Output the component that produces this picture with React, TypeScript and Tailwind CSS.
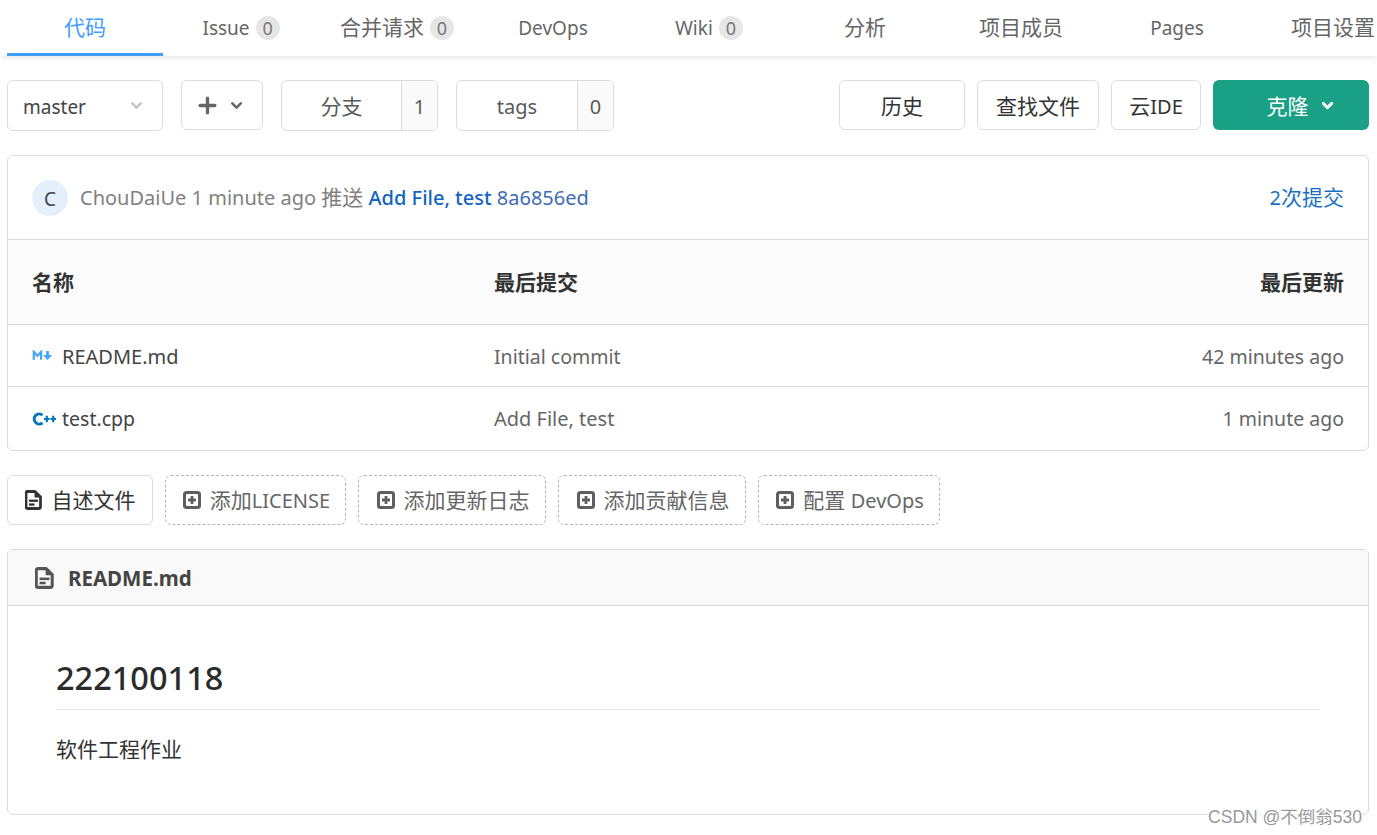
import { ChevronDown, Plus } from "lucide-react";

const tabs = [
  { label: "代码", active: true },
  { label: "Issue", count: 0, latin: true },
  { label: "合并请求", count: 0 },
  { label: "DevOps", latin: true },
  { label: "Wiki", count: 0, latin: true },
  { label: "分析" },
  { label: "项目成员" },
  { label: "Pages", latin: true },
  { label: "项目设置" },
];

function DocIcon({ className }: { className: string }) {
  return (
    <svg viewBox="0 0 17 20" className={className} fill="none">
      <path
        d="M2.500 1.500h7.500l5.500 5.500v10a1.500 1.500 0 0 1-1.500 1.500H2.500A1.500 1.500 0 0 1 1 17V3a1.500 1.500 0 0 1 1.500-1.500z"
        stroke="currentColor"
        strokeWidth="2.800"
        strokeLinejoin="round"
      />
      <path d="M9.500 2v5.500H15z" fill="currentColor" />
      <rect x="4" y="9.600" width="9" height="2.300" fill="currentColor" />
      <rect x="4" y="13.400" width="5.500" height="2.300" fill="currentColor" />
    </svg>
  );
}

function AddIcon() {
  return (
    <svg viewBox="0 0 18 18" className="w-[18px] h-[18px] text-[#5f5f5f] shrink-0">
      <rect x="0" y="0" width="18" height="18" rx="3.500" fill="currentColor" />
      <rect x="3" y="3" width="12" height="12" rx="1" fill="#fff" />
      <path d="M9 5v8M5 9h8" stroke="currentColor" strokeWidth="2.800" />
    </svg>
  );
}

function CountButton({ label, count, w, latin }: { label: string; count: number; w: string; latin?: boolean }) {
  return (
    <div className={`flex h-[51px] border border-[#dcdcdc] rounded-md overflow-hidden pt-[2px] ${w}`}>
      <div className={`flex-1 flex items-center justify-center ${latin ? "text-[20px]" : ""}`}>{label}</div>
      <div className="w-[36px] -mt-[2px] pt-[2px] flex items-center justify-center border-l border-[#dcdcdc] bg-[#fafafa] text-[20px]">
        {count}
      </div>
    </div>
  );
}

function ToolButton({ label, w }: { label: React.ReactNode; w: string }) {
  return (
    <div className={`h-[50px] pt-[4px] flex items-center justify-center border border-[#dcdcdc] rounded-md text-[#333] ${w}`}>
      {label}
    </div>
  );
}

function AddButton({ label, w }: { label: React.ReactNode; w: string }) {
  return (
    <div className={`h-[50px] pl-[2px] flex items-center justify-center gap-[9px] border border-dashed border-[#b5b5b5] rounded-md text-[#666] ${w}`}>
      <AddIcon />
      <span className="pt-[2px]">{label}</span>
    </div>
  );
}

export default function App() {
  return (
    <div className="w-[1377px] h-[835px] overflow-hidden relative bg-white text-[21px] text-[#5a5a5a] font-['Noto_Sans','Noto_Sans_CJK_SC',sans-serif]">
      {/* tabs */}
      <div className="h-[56px] pl-[7px] flex shadow-[0_2px_6px_rgba(0,0,0,0.1)]">
        {tabs.map((t) => (
          <div
            key={t.label}
            className={`w-[156px] shrink-0 flex items-center justify-center gap-[6px] ${
              t.active ? "text-[#409eff] border-b-[3px] border-[#409eff] pt-[3px]" : "text-[#666]"
            }`}
          >
            <span className={t.latin ? "text-[19px]" : ""}>{t.label}</span>
            {t.count !== undefined && (
              <span className="w-[24px] h-[24px] rounded-full bg-[#e6e6e6] text-[#777] text-[18px] flex items-center justify-center">
                {t.count}
              </span>
            )}
          </div>
        ))}
      </div>

      <div className="px-[7px] w-[1376px]">
        {/* branch bar */}
        <div className="mt-[24px] flex justify-between">
          <div className="flex gap-[18px]">
            <div className="w-[156px] h-[51px] flex items-center justify-between pl-[15px] pr-[17px] border border-[#dcdcdc] rounded-md text-[#444] text-[19px]">
              <span className="pt-[3px]">master</span>
              <ChevronDown size={17} strokeWidth={3.4} className="text-[#c4c4c4]" />
            </div>
            <div className="w-[82px] h-[50px] pr-[4px] flex items-center justify-center gap-[8px] border border-[#dcdcdc] rounded-md text-[#666]">
              <Plus size={25} strokeWidth={3.2} />
              <ChevronDown size={17} strokeWidth={3.6} />
            </div>
            <CountButton label="分支" count={1} w="w-[157px]" />
            <CountButton label="tags" count={0} w="w-[158px]" latin />
          </div>
          <div className="flex gap-[12px]">
            <ToolButton label="历史" w="w-[126px]" />
            <ToolButton label="查找文件" w="w-[122px]" />
            <ToolButton label={<>云<span className="text-[20px]">IDE</span></>} w="w-[90px]" />
            <div className="w-[156px] h-[50px] flex items-center justify-center gap-[10px] pl-[20px] rounded-md bg-[#1aa085] text-white">
              <span className="pt-[4px]">克隆</span>
              <ChevronDown size={17} strokeWidth={4} />
            </div>
          </div>
        </div>

        {/* file list */}
        <div className="mt-[24px] h-[296px] border border-[#dcdcdc] rounded-md overflow-hidden">
          <div className="h-[84px] flex items-center justify-between px-[24px] border-b border-[#dcdcdc]">
            <div className="flex items-center gap-[12px] text-[#808080] text-[20px]">
              <span className="w-[36px] h-[36px] rounded-full bg-[#e3f0fc] text-[#444] text-[19px] flex items-center justify-center pt-[4px]">
                C
              </span>
              <span>
                ChouDaiUe 1 minute ago <span className="text-[21px]">推送</span>{" "}
                <span className="text-[#1565c0] font-medium">Add File, test</span>{" "}
                <span className="text-[#3f6bb5]">8a6856ed</span>
              </span>
            </div>
            <span className="text-[#1a6fc4]">
              <span className="text-[20px]">2</span>次提交
            </span>
          </div>
          <div className="h-[85px] pt-[1px] flex items-center px-[24px] bg-[#fcfcfc] border-b border-[#dcdcdc] font-bold text-[#333]">
            <div className="w-[462px]">名称</div>
            <div className="flex-1">最后提交</div>
            <div>最后更新</div>
          </div>
          <div className="h-[62px] flex items-center px-[24px] border-b border-[#dcdcdc] text-[20px]">
            <div className="w-[462px] flex items-center gap-[9px] text-[#444]">
              <svg viewBox="0 0 22 12" className="w-[21px] h-[11px] text-[#42a5f5]">
                <path d="M1.500 10.500V2l4 4.500 4-4.500v8.500" fill="none" stroke="currentColor" strokeWidth="2.400" />
                <path d="M15 1h3v4.500h3.500l-5 5.500-5-5.500H15z" fill="currentColor" />
              </svg>
              <span className="pt-[2px]">README.md</span>
            </div>
            <div className="flex-1 text-[#666] pt-[2px] text-[19.500px]">Initial commit</div>
            <div className="text-[#666] pt-[2px] text-[19.500px]">42 minutes ago</div>
          </div>
          <div className="h-[63px] flex items-center px-[24px] text-[20px]">
            <div className="w-[462px] flex items-center gap-[6px] text-[#444]">
              <svg viewBox="0 0 24 14" className="w-[24px] h-[14px] text-[#0277bd]">
                <path d="M10.500 3.200A5 5 0 1 0 10.500 10.800" fill="none" stroke="currentColor" strokeWidth="3" />
                <path d="M12 7h5.600M14.800 3.800v6.400M18.400 7h5.600M21.200 3.800v6.400" stroke="currentColor" strokeWidth="2.200" />
              </svg>
              <span className="pt-[1px] text-[19.500px]">test.cpp</span>
            </div>
            <div className="flex-1 text-[#666] pt-[1px]">Add File, test</div>
            <div className="text-[#666] pt-[1px] text-[19.500px]">1 minute ago</div>
          </div>
        </div>

        {/* readme actions */}
        <div className="mt-[24px] flex gap-[12px]">
          <div className="w-[146px] h-[50px] flex items-center justify-center gap-[10px] border border-[#dcdcdc] rounded-md text-[#333]">
            <DocIcon className="w-[17px] h-[20px] text-[#333]" />
            <span className="pt-[2px]">自述文件</span>
          </div>
          <AddButton label={<>添加<span className="text-[20px]">LICENSE</span></>} w="w-[181px]" />
          <AddButton label="添加更新日志" w="w-[188px]" />
          <AddButton label="添加贡献信息" w="w-[188px]" />
          <AddButton label={<>配置 <span className="text-[20px]">DevOps</span></>} w="w-[182px]" />
        </div>

        {/* readme */}
        <div className="mt-[24px] h-[266px] border border-[#dcdcdc] rounded-md overflow-hidden">
          <div className="h-[56px] flex items-center gap-[14px] pl-[27px] bg-[#f9f9f9] border-b border-[#dcdcdc] font-bold text-[20.500px] text-[#444]">
            <DocIcon className="w-[19px] h-[22px] text-[#555]" />
            <span className="pt-[1px]">README.md</span>
          </div>
          <div className="px-[48px] pt-[46px] text-[#333]">
            <div className="text-[32.500px] leading-[52px] h-[58px] border-b border-[#e8e8e8] font-medium text-[#2b2b2b]">222100118</div>
            <p className="mt-[24px]">软件工程作业</p>
          </div>
        </div>
      </div>

      {/* watermark */}
      <div className="absolute right-[15px] top-[806px] text-[17.500px] leading-[22px] text-[#999] bg-white/70 font-['Liberation_Sans','Noto_Sans_CJK_SC',sans-serif]">
        CSDN @不倒翁530
      </div>
    </div>
  );
}
